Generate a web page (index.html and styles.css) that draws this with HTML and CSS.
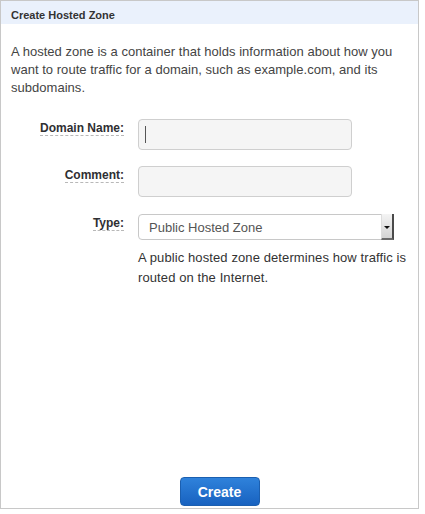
FILE: index.html
```html
<!DOCTYPE html>
<html>
<head>
<meta charset="utf-8">
<link rel="stylesheet" href="styles.css">
</head>
<body>
<div class="panel">
  <div class="panel-header">Create Hosted Zone</div>
  <p class="intro">A hosted zone is a container that holds information about how you want to route traffic for a domain, such as example.com, and its subdomains.</p>
  <div class="form">
    <div class="label-cell"><span class="label">Domain Name:</span></div>
    <div class="field-cell">
      <div class="input-wrap">
        <input class="text-input" type="text">
        <span class="caret"></span>
      </div>
    </div>
    <div class="label-cell"><span class="label">Comment:</span></div>
    <div class="field-cell">
      <input class="text-input" type="text">
    </div>
    <div class="label-cell type-label"><span class="label">Type:</span></div>
    <div class="field-cell">
      <div class="select">
        <span class="select-value">Public Hosted Zone</span>
        <span class="select-arrow"><span class="tri"></span></span>
      </div>
      <p class="help">A public hosted zone determines how traffic is routed on the Internet.</p>
    </div>
  </div>
  <div class="footer">
    <button class="btn-primary">Create</button>
  </div>
</div>
</body>
</html>
```

FILE: styles.css
```css
* { box-sizing: border-box; }
html, body { margin: 0; padding: 0; background: #fff; }
body { font-family: "Liberation Sans", Arial, sans-serif; }

.panel {
  width: 419px;
  height: 509px;
  border: 1px solid #c8c8c8;
  display: flex;
  flex-direction: column;
  background: #fff;
}

.panel-header {
  height: 23px;
  background: #eaf1fc;
  padding: 7px 10px 0;
  font-size: 11px;
  line-height: 14px;
  font-weight: bold;
  color: #333;
}

.intro {
  margin: 19px 10px 0;
  font-size: 13px;
  line-height: 18px;
  color: #444;
  letter-spacing: 0.03px;
}

.form {
  margin-top: 22px;
  display: grid;
  grid-template-columns: 123px 1fr;
  column-gap: 14px;
  row-gap: 16px;
}

.label-cell {
  text-align: right;
  padding-top: 2px;
  font-size: 12px;
  line-height: 15px;
}
.type-label { padding-top: 3px; }

.label {
  font-weight: bold;
  color: #2f2f33;
  border-bottom: 1px dashed #b8b8b8;
}

.field-cell { min-width: 0; }

.input-wrap { position: relative; width: 214px; }

.text-input {
  display: block;
  width: 214px;
  height: 31px;
  border: 1px solid #cfcfcf;
  border-radius: 4px;
  background: #f5f5f5;
  margin: 0;
  padding: 0 8px;
  font: 13px "Liberation Sans", Arial, sans-serif;
  outline: none;
}

.caret {
  position: absolute;
  left: 7px;
  top: 7px;
  width: 1px;
  height: 17px;
  background: #555;
}

.select {
  width: 256px;
  height: 26px;
  border: 1px solid #c8c8c8;
  border-radius: 4px 0 0 4px;
  display: flex;
  align-items: center;
  background: #fff;
  margin-top: 1px;
}
.select-value {
  flex: 1;
  padding-left: 10px;
  font-size: 13px;
  color: #555;
}
.select-arrow {
  width: 13px;
  align-self: stretch;
  margin: -1px -1px -1px 0;
  background: linear-gradient(#f4f4f4, #d4d4d4);
  border-left: 1px solid #ddd;
  border-right: 2px solid #4a4a4a;
  border-bottom: 2px solid #6a6a6a;
  display: flex;
  align-items: center;
  justify-content: center;
}
.tri {
  width: 0;
  height: 0;
  border-left: 3px solid transparent;
  border-right: 3px solid transparent;
  border-top: 3px solid #111;
  margin-top: 2px;
}

.help {
  margin: 8px 0 0;
  font-size: 13px;
  line-height: 20px;
  color: #333;
  letter-spacing: 0.1px;
}

.footer {
  margin-top: auto;
  padding: 0 0 2px 20px;
  display: flex;
  justify-content: center;
}

.btn-primary {
  width: 80px;
  height: 29px;
  border: 1px solid #1b5fb0;
  border-radius: 4px;
  background: linear-gradient(#2f82db, #1862c0);
  color: #fff;
  font: bold 14px "Liberation Sans", Arial, sans-serif;
  padding: 0;
}
```
